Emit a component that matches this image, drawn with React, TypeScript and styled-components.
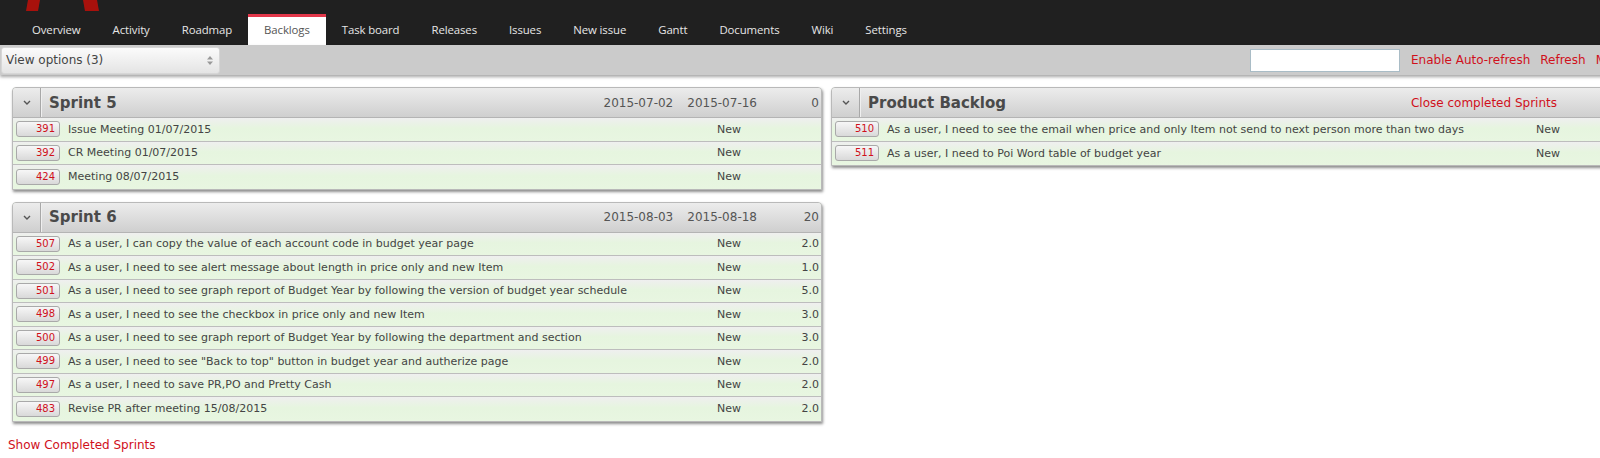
import React from "react";
import styled, { createGlobalStyle } from "styled-components";

const GlobalStyle = createGlobalStyle`
  html, body { margin: 0; padding: 0; background: #fff; overflow: hidden; }
  body { font-family: "DejaVu Sans", Verdana, sans-serif; color: #444; }
  * { box-sizing: border-box; }
`;

const Page = styled.div`
  width: 1660px;
  min-height: 458px;
  display: flex;
  flex-direction: column;
`;

const TopBar = styled.header`
  height: 45px;
  background: #202020;
  display: flex;
  flex-direction: column;
`;

const LogoStrip = styled.div`
  height: 14px;
  padding-left: 26px;
  display: flex;
  align-items: flex-start;
`;

const Tabs = styled.nav`
  display: flex;
  padding-left: 16px;
  height: 31px;
`;

const Tab = styled.a<{ $active?: boolean }>`
  display: flex;
  align-items: center;
  padding: 0 16px 3px;
  font-family: "Open Sans", sans-serif;
  font-size: 11.4px;
  letter-spacing: -0.1px;
  text-decoration: none;
  color: ${(p) => (p.$active ? "#555" : "#e6e6e6")};
  background: ${(p) => (p.$active ? "#fff" : "transparent")};
  border-top: 3px solid ${(p) => (p.$active ? "#e2374a" : "transparent")};
`;

const Toolbar = styled.div`
  height: 30px;
  background: #cbcbcb;
  display: flex;
  align-items: center;
  padding: 0 0 0 1px;
  box-shadow: 0 2px 3px rgba(0, 0, 0, 0.35);
  position: relative;
  z-index: 1;
`;

const ViewSelect = styled.div`
  width: 219px;
  height: 27px;
  border-radius: 3px;
  background: linear-gradient(#fbfbfb, #e4e4e4);
  border: 1px solid #d6d6d6;
  display: flex;
  align-items: center;
  justify-content: space-between;
  padding: 0 6px 0 4px;
  font-size: 12px;
  color: #444;
`;

const ToolRight = styled.div`
  margin-left: auto;
  display: flex;
  align-items: center;
  gap: 10px;
  width: 410px;
  overflow: hidden;
  white-space: nowrap;
`;

const SearchBox = styled.input`
  width: 150px;
  height: 23px;
  border: 1px solid #a9bcc6;
  background: #fff;
  margin-right: 1px;
  padding: 0;
`;

const ToolLink = styled.a`
  color: #d0101b;
  font-size: 12px;
  text-decoration: none;
`;

const Board = styled.main`
  display: flex;
  align-items: flex-start;
  gap: 9px;
  padding: 12px 0 0 12px;
`;

const Column = styled.div`
  display: flex;
  flex-direction: column;
  gap: 12px;
  width: 810px;
`;

const Panel = styled.section`
  width: 810px;
  border: 1px solid #b9b9b9;
  border-radius: 4px 4px 0 0;
  box-shadow: 1px 2px 3px rgba(0, 0, 0, 0.45);
  background: #eaf5e4;
`;

const PanelHeader = styled.div`
  height: 30px;
  display: flex;
  align-items: center;
  background: linear-gradient(#ececec, #cfcfcf);
  border-bottom: 1px solid #b4b4b4;
  border-radius: 3px 3px 0 0;
  padding-right: 2px;
`;

const Toggle = styled.div`
  width: 28px;
  align-self: stretch;
  display: flex;
  align-items: center;
  justify-content: center;
  border-right: 1px solid #a8a8a8;
  box-shadow: 1px 0 0 #efefef;
`;

const Title = styled.h2`
  flex: 1;
  margin: 0 0 0 8px;
  font-size: 15px;
  font-weight: bold;
  color: #4a4a4a;
`;

const HeadDate = styled.span<{ $gap?: number }>`
  font-size: 12px;
  color: #555;
  margin-left: ${(p) => p.$gap ?? 0}px;
`;

const Velocity = styled.span`
  width: 62px;
  text-align: right;
  font-size: 12px;
  color: #555;
`;

const HeadLink = styled.a`
  font-size: 12px;
  color: #d0101b;
  text-decoration: none;
  margin-right: 81px;
`;

const Row = styled.div`
  height: 23.5px;
  display: grid;
  grid-template-columns: 44px 1fr 80px 50px;
  align-items: center;
  padding: 0 2px 0 3px;
  background: linear-gradient(#efefef, #e6f5df 45%, #e8f6e1);
  border-bottom: 1px solid #bdbdbd;
  font-size: 11px;
  color: #444;
  &:last-child { border-bottom: none; }
`;

const IdButton = styled.span`
  height: 16px;
  border: 1px solid #a9a9a9;
  border-radius: 3px;
  background: linear-gradient(#f7f7f7, #d9d9d9);
  color: #d0101b;
  font-size: 10px;
  text-align: right;
  padding-right: 4px;
  line-height: 14px;
`;

const Subject = styled.span`
  padding-left: 8px;
  white-space: nowrap;
  overflow: hidden;
`;

const Status = styled.span`
  text-align: center;
`;

const Points = styled.span`
  text-align: right;
`;

const ShowCompleted = styled.a`
  display: block;
  margin: 16px 0 0 8px;
  font-size: 12px;
  color: #d0101b;
  text-decoration: none;
`;

const Chevron = () => (
  <svg width="8" height="5" viewBox="0 0 8 5">
    <path d="M1 1 L4 4 L7 1" fill="none" stroke="#555" strokeWidth="1.4" />
  </svg>
);

const SelectArrows = () => (
  <svg width="6" height="9" viewBox="0 0 6 9">
    <path d="M3 0 L6 3.5 H0 Z M3 9 L6 5.5 H0 Z" fill="#999" />
  </svg>
);

const Logo = () => (
  <svg width="76" height="12" viewBox="0 0 76 12">
    <path d="M2 0 H14 L12 11 H0 Z" fill="#a8110c" />
    <path d="M57 0 H71 L73 11 H59 Z" fill="#a8110c" />
  </svg>
);

type Story = { id: number; subject: string; status: string; points?: string };

type Sprint = { name: string; start: string; end: string; velocity: string; stories: Story[] };

const sprints: Sprint[] = [
  {
    name: "Sprint 5",
    start: "2015-07-02",
    end: "2015-07-16",
    velocity: "0",
    stories: [
      { id: 391, subject: "Issue Meeting 01/07/2015", status: "New" },
      { id: 392, subject: "CR Meeting 01/07/2015", status: "New" },
      { id: 424, subject: "Meeting 08/07/2015", status: "New" },
    ],
  },
  {
    name: "Sprint 6",
    start: "2015-08-03",
    end: "2015-08-18",
    velocity: "20",
    stories: [
      { id: 507, subject: "As a user, I can copy the value of each account code in budget year page", status: "New", points: "2.0" },
      { id: 502, subject: "As a user, I need to see alert message about length in price only and new Item", status: "New", points: "1.0" },
      { id: 501, subject: "As a user, I need to see graph report of Budget Year by following the version of budget year schedule", status: "New", points: "5.0" },
      { id: 498, subject: "As a user, I need to see the checkbox in price only and new Item", status: "New", points: "3.0" },
      { id: 500, subject: "As a user, I need to see graph report of Budget Year by following the department and section", status: "New", points: "3.0" },
      { id: 499, subject: "As a user, I need to see \"Back to top\" button in budget year and autherize page", status: "New", points: "2.0" },
      { id: 497, subject: "As a user, I need to save PR,PO and Pretty Cash", status: "New", points: "2.0" },
      { id: 483, subject: "Revise PR after meeting 15/08/2015", status: "New", points: "2.0" },
    ],
  },
];

const backlog: Story[] = [
  { id: 510, subject: "As a user, I need to see the email when price and only Item not send to next person more than two days", status: "New" },
  { id: 511, subject: "As a user, I need to Poi Word table of budget year", status: "New" },
];

const tabs = ["Overview", "Activity", "Roadmap", "Backlogs", "Task board", "Releases", "Issues", "New issue", "Gantt", "Documents", "Wiki", "Settings"];

const StoryRow = ({ s }: { s: Story }) => (
  <Row>
    <IdButton>{s.id}</IdButton>
    <Subject>{s.subject}</Subject>
    <Status>{s.status}</Status>
    <Points>{s.points ?? ""}</Points>
  </Row>
);

export default function App() {
  return (
    <Page>
      <GlobalStyle />
      <TopBar>
        <LogoStrip>
          <Logo />
        </LogoStrip>
        <Tabs>
          {tabs.map((t) => (
            <Tab key={t} $active={t === "Backlogs"}>
              {t}
            </Tab>
          ))}
        </Tabs>
      </TopBar>
      <Toolbar>
        <ViewSelect>
          <span>View options (3)</span>
          <SelectArrows />
        </ViewSelect>
        <ToolRight>
          <SearchBox />
          <ToolLink>Enable Auto-refresh</ToolLink>
          <ToolLink>Refresh</ToolLink>
          <ToolLink>More</ToolLink>
        </ToolRight>
      </Toolbar>
      <Board>
        <Column>
          {sprints.map((sp) => (
            <Panel key={sp.name}>
              <PanelHeader>
                <Toggle>
                  <Chevron />
                </Toggle>
                <Title>{sp.name}</Title>
                <HeadDate>{sp.start}</HeadDate>
                <HeadDate $gap={14}>{sp.end}</HeadDate>
                <Velocity>{sp.velocity}</Velocity>
              </PanelHeader>
              {sp.stories.map((s) => (
                <StoryRow key={s.id} s={s} />
              ))}
            </Panel>
          ))}
        </Column>
        <Column>
          <Panel>
            <PanelHeader>
              <Toggle>
                <Chevron />
              </Toggle>
              <Title>Product Backlog</Title>
              <HeadLink>Close completed Sprints</HeadLink>
            </PanelHeader>
            {backlog.map((s) => (
              <StoryRow key={s.id} s={s} />
            ))}
          </Panel>
        </Column>
      </Board>
      <ShowCompleted>Show Completed Sprints</ShowCompleted>
    </Page>
  );
}
